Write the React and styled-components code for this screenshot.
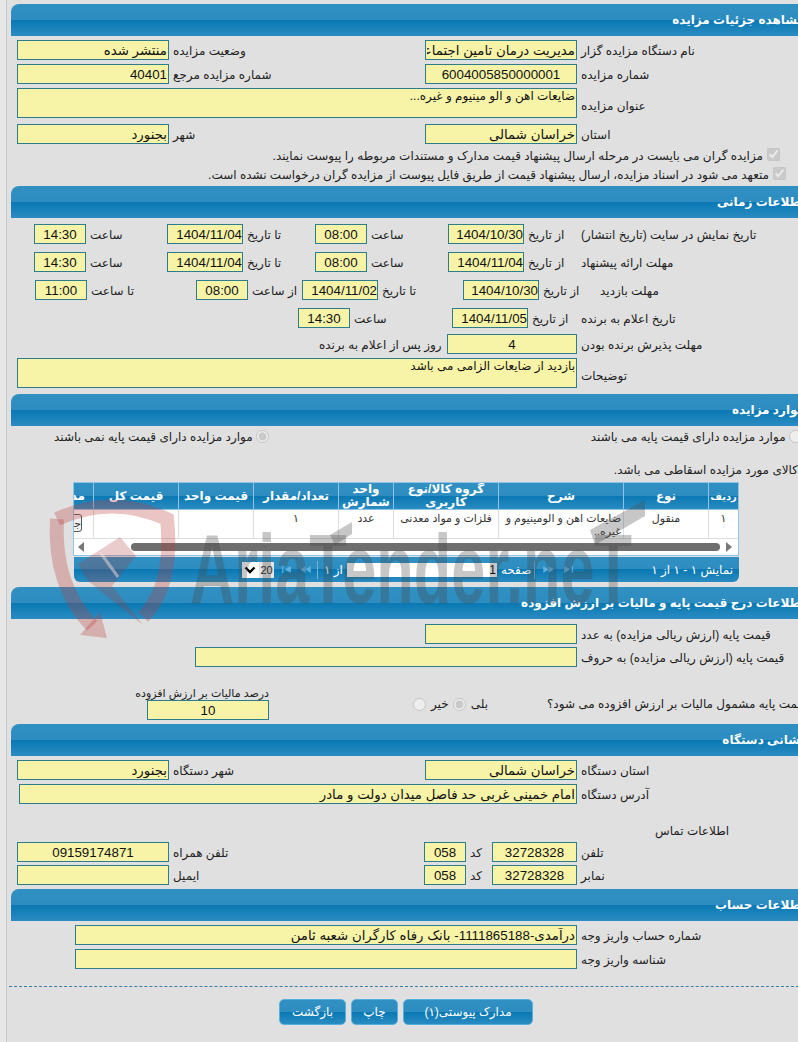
import styled, { createGlobalStyle } from 'styled-components';

const GlobalStyle = createGlobalStyle`
  html, body {
    margin: 0;
    padding: 0;
    background: #e6e6e6;
    overflow: hidden;
  }
  body {
    font-family: 'Liberation Sans', 'DejaVu Sans', sans-serif;
    font-size: 12px;
    color: #222;
  }
`;

const barGradient = 'linear-gradient(#3090c2 0, #2e8dc0 50%, #0978b2 50%, #2a8cc2 100%)';

export default function App() {
  return (
    <Page>
      <GlobalStyle />
      <Shell>
        <Section>
          <SectionTitle>مشاهده جزئیات مزایده</SectionTitle>
          <Row $mt={4} $pl={6}>
            <Field $w={152} readOnly value="منتشر شده" />
            <Label $w={256}>وضعیت مزایده</Label>
            <Field $w={152} readOnly value="مدیریت درمان تامین اجتماعی" />
            <Label>نام دستگاه مزایده گزار</Label>
          </Row>
          <Row $mt={4} $pl={6}>
            <Field $w={152} readOnly value="40401" />
            <Label $w={256}>شماره مزایده مرجع</Label>
            <Field $w={152} $center readOnly value="6004005850000001" />
            <Label>شماره مزایده</Label>
          </Row>
          <Row $mt={4} $pl={6} $h={30}>
            <Note $w={560} readOnly value="ضایعات اهن و الو مینیوم و غیره..." />
            <Label $low>عنوان مزایده</Label>
          </Row>
          <Row $mt={6} $pl={6}>
            <Field $w={152} readOnly value="بجنورد" />
            <Label $w={256}>شهر</Label>
            <Field $w={152} readOnly value="خراسان شمالی" />
            <Label>استان</Label>
          </Row>
          <CheckRow $mt={3} $pr={31}>
            <Text>مزایده گران می بایست در مرحله ارسال پیشنهاد قیمت مدارک و مستندات مربوطه را پیوست نمایند.</Text>
            <Check type="checkbox" checked disabled readOnly />
          </CheckRow>
          <CheckRow $mt={1} $pr={25}>
            <Text>متعهد می شود در اسناد مزایده، ارسال پیشنهاد قیمت از طریق فایل پیوست از مزایده گران درخواست نشده است.</Text>
            <Check type="checkbox" checked disabled readOnly />
          </CheckRow>
          <Spacer $h={2} />
        </Section>

        <Section>
          <SectionTitle>اطلاعات زمانی</SectionTitle>
          <Row $mt={6} $pl={23}>
            <TimeField $w={52} readOnly value="14:30" />
            <Label $w={81}>ساعت</Label>
            <DateField $w={76} readOnly value="1404/11/04" />
            <Label $w={72}>تا تاریخ</Label>
            <TimeField $w={52} readOnly value="08:00" />
            <Label $w={81}>ساعت</Label>
            <DateField $w={76} readOnly value="1404/10/30" />
            <Label $w={53}>از تاریخ</Label>
            <Label>تاریخ نمایش در سایت (تاریخ انتشار)</Label>
          </Row>
          <Row $mt={8} $pl={23}>
            <TimeField $w={52} readOnly value="14:30" />
            <Label $w={81}>ساعت</Label>
            <DateField $w={76} readOnly value="1404/11/04" />
            <Label $w={72}>تا تاریخ</Label>
            <TimeField $w={52} readOnly value="08:00" />
            <Label $w={81}>ساعت</Label>
            <DateField $w={76} readOnly value="1404/11/04" />
            <Label $w={53}>از تاریخ</Label>
            <Label>مهلت ارائه پیشنهاد</Label>
          </Row>
          <Row $mt={8} $pl={24}>
            <TimeField $w={52} readOnly value="11:00" />
            <Label $w={109}>تا ساعت</Label>
            <TimeField $w={52} readOnly value="08:00" />
            <Label $w={54}>از ساعت</Label>
            <DateField $w={76} readOnly value="1404/11/02" />
            <Label $w={85}>تا تاریخ</Label>
            <DateField $w={76} readOnly value="1404/10/30" />
            <Label $w={57}>از تاریخ</Label>
            <Label>مهلت بازدید</Label>
          </Row>
          <Row $mt={8} $pl={287}>
            <TimeField $w={52} readOnly value="14:30" />
            <Label $w={102}>ساعت</Label>
            <DateField $w={76} readOnly value="1404/11/05" />
            <Label $w={49}>از تاریخ</Label>
            <Label>تاریخ اعلام به برنده</Label>
          </Row>
          <Row $mt={6} $pl={304}>
            <Label $w={132}>روز پس از اعلام به برنده</Label>
            <Field $w={130} $center readOnly value="4" />
            <Label>مهلت پذیرش برنده بودن</Label>
          </Row>
          <Row $mt={4} $pl={6} $h={30}>
            <Note $w={560} readOnly value="بازدید از ضایعات الزامی می باشد" />
            <Label $low>توضیحات</Label>
          </Row>
          <Spacer $h={6} />
        </Section>

        <Section>
          <SectionTitle>موارد مزایده</SectionTitle>
          <Row $mt={2} $pl={43} $h={18}>
            <Text>موارد مزایده دارای قیمت پایه نمی باشند</Text>
            <Radio type="radio" checked disabled readOnly $ml={3} />
            <Spacer $w={322} />
            <Text>موارد مزایده دارای قیمت پایه می باشند</Text>
            <Radio type="radio" disabled readOnly $ml={3} />
          </Row>
          <NoteLine>کالای مورد مزایده اسقاطی می باشد.</NoteLine>
          <Grid>
            <GridTable>
              <colgroup>
                <col style={{ width: 20 }} />
                <col style={{ width: 85 }} />
                <col style={{ width: 75 }} />
                <col style={{ width: 85 }} />
                <col style={{ width: 55 }} />
                <col style={{ width: 105 }} />
                <col style={{ width: 125 }} />
                <col style={{ width: 85 }} />
                <col style={{ width: 29 }} />
              </colgroup>
              <thead>
                <tr>
                  <HeadCell $clip>مدارک</HeadCell>
                  <HeadCell>قیمت کل</HeadCell>
                  <HeadCell>قیمت واحد</HeadCell>
                  <HeadCell>تعداد/مقدار</HeadCell>
                  <HeadCell>واحد شمارش</HeadCell>
                  <HeadCell>گروه کالا/نوع کاربری</HeadCell>
                  <HeadCell>شرح</HeadCell>
                  <HeadCell>نوع</HeadCell>
                  <HeadCell $small>ردیف</HeadCell>
                </tr>
              </thead>
              <tbody>
                <tr>
                  <Cell $clip><DocButton>جزئیات</DocButton></Cell>
                  <Cell />
                  <Cell />
                  <Cell>۱</Cell>
                  <Cell>عدد</Cell>
                  <Cell>فلزات و مواد معدنی</Cell>
                  <Cell $right>ضایعات اهن و الومینیوم و غیره..</Cell>
                  <Cell>منقول</Cell>
                  <Cell>۱</Cell>
                </tr>
              </tbody>
            </GridTable>
            <ScrollBar>
              <ScrollArrow viewBox="0 0 6 10"><path d="M6 0 L0 5 L6 10 Z" /></ScrollArrow>
              <ScrollThumb />
              <ScrollArrow viewBox="0 0 6 10"><path d="M0 0 L6 5 L0 10 Z" /></ScrollArrow>
            </ScrollBar>
          </Grid>
          <Pager>
            <PageSize>
              <svg width="12" height="10" viewBox="0 0 12 10">
                <path d="M1.5 2.5 L6 7 L10.5 2.5" fill="none" stroke="#000" strokeWidth="2.4" />
              </svg>
              <PageSizeValue>20</PageSizeValue>
            </PageSize>
            <NavIcon viewBox="0 0 12 8"><path d="M1 0 H2.4 V8 H1 Z M11 0 V8 L4 4 Z" /></NavIcon>
            <NavIcon viewBox="0 0 12 8" $ml={8}><path d="M6 0 V8 L0 4 Z M12 0 V8 L6 4 Z" /></NavIcon>
            <PagerDivider $ml={6} />
            <PagerText $ml={6}>از ۱</PagerText>
            <PageInput readOnly value="1" />
            <PagerText $ml={4}>صفحه</PagerText>
            <PagerDivider $ml={3} />
            <NavIcon viewBox="0 0 12 8" $ml={8}><path d="M0 0 L6 4 L0 8 Z M6 0 L12 4 L6 8 Z" /></NavIcon>
            <NavIcon viewBox="0 0 12 8" $ml={9}><path d="M1 0 L8 4 L1 8 Z M9.6 0 H11 V8 H9.6 Z" /></NavIcon>
            <PagerCount>نمایش ۱ - ۱ از ۱</PagerCount>
          </Pager>
          <Spacer $h={5} />
        </Section>

        <Section>
          <SectionTitle>اطلاعات درج قیمت پایه و مالیات بر ارزش افزوده</SectionTitle>
          <Row $mt={5} $pl={414}>
            <Field $w={152} readOnly value="" />
            <Label>قیمت پایه (ارزش ریالی مزایده) به عدد</Label>
          </Row>
          <Row $mt={3} $pl={184}>
            <Field $w={382} readOnly value="" />
            <Label>قیمت پایه (ارزش ریالی مزایده) به حروف</Label>
          </Row>
          <TaxRow>
            <TaxBox>
              <TaxLabel>درصد مالیات بر ارزش افزوده</TaxLabel>
              <Field $w={122} $center readOnly value="10" />
            </TaxBox>
            <Radio type="radio" disabled readOnly $ml={144} />
            <Text $ml={5}>خیر</Text>
            <Radio type="radio" checked disabled readOnly $ml={4} />
            <Text $ml={5}>بلی</Text>
            <Text $ml={59}>قیمت پایه مشمول مالیات بر ارزش افزوده می شود؟</Text>
          </TaxRow>
          <Spacer $h={4} />
        </Section>

        <Section>
          <SectionTitle>نشانی دستگاه</SectionTitle>
          <Row $mt={4} $pl={6}>
            <Field $w={152} readOnly value="بجنورد" />
            <Label $w={256}>شهر دستگاه</Label>
            <Field $w={152} readOnly value="خراسان شمالی" />
            <Label>استان دستگاه</Label>
          </Row>
          <Row $mt={4} $pl={8}>
            <Field $w={558} readOnly value="امام خمینی غربی حد فاصل میدان دولت و مادر" />
            <Label>آدرس دستگاه</Label>
          </Row>
          <Row $mt={20} $pl={644} $h={14}>
            <Text>اطلاعات تماس</Text>
          </Row>
          <Row $mt={4} $pl={6}>
            <Field $w={152} $center readOnly value="09159174871" />
            <Label $w={255}>تلفن همراه</Label>
            <Field $w={42} $center readOnly value="058" />
            <Label $w={26}>کد</Label>
            <Field $w={85} $center readOnly value="32728328" />
            <Label>تلفن</Label>
          </Row>
          <Row $mt={3} $pl={6}>
            <Field $w={152} readOnly value="" />
            <Label $w={255}>ایمیل</Label>
            <Field $w={42} $center readOnly value="058" />
            <Label $w={26}>کد</Label>
            <Field $w={85} $center readOnly value="32728328" />
            <Label>نمابر</Label>
          </Row>
          <Spacer $h={4} />
        </Section>

        <Section>
          <SectionTitle>اطلاعات حساب</SectionTitle>
          <Row $mt={4} $pl={64}>
            <Field $w={502} readOnly value="درآمدی-1111865188- بانک رفاه کارگران شعبه ثامن" />
            <Label>شماره حساب واریز وجه</Label>
          </Row>
          <Row $mt={4} $pl={64}>
            <Field $w={502} readOnly value="" />
            <Label>شناسه واریز وجه</Label>
          </Row>
        </Section>

        <Divider />
        <Actions>
          <ActionButton $w={67}>بازگشت</ActionButton>
          <ActionButton $w={47}>چاپ</ActionButton>
          <ActionButton $w={130}>مدارک پیوستی(۱)</ActionButton>
        </Actions>
      </Shell>

      <Watermark viewBox="0 0 798 1042" aria-hidden="true">
        <g fill="none" stroke="rgb(190,60,60)" strokeOpacity="0.3" strokeWidth="14">
          <path d="M57 519 Q112 494 167 519 Q174 585 143 617" />
          <path d="M57 519 Q53 585 92 626" />
        </g>
        <path d="M120 537 L136 556 L112 586 L143 625 L87 580 L78 564 Z" fill="rgb(170,50,50)" fillOpacity="0.25" />
        <path d="M100 552 L118 577" stroke="rgb(240,220,220)" strokeOpacity="0.5" strokeWidth="3" />
        <path d="M80 635 L107 638 L100 612 Z" fill="rgb(190,60,60)" fillOpacity="0.3" />
        <WatermarkText x="190" y="603" textLength="442" lengthAdjust="spacingAndGlyphs">AriaTender.neT</WatermarkText>
        <path d="M330 535 L352 522 L352 534 L335 545 Z M590 530 L645 500 L645 516 L595 545 Z" fill="rgb(70,70,70)" fillOpacity="0.3" />
      </Watermark>
    </Page>
  );
}

const Page = styled.div`
  position: relative;
  width: 798px;
  height: 1042px;
  overflow: hidden;
`;

const Shell = styled.div`
  margin-left: 6px;
  height: 1042px;
  box-sizing: border-box;
  padding: 4px 0 0 4px;
  border-left: 1px solid #c8c8c8;
  background: #e0e0e0;
  width: 830px;
`;

const Section = styled.section`
  width: 800px;
`;

const SectionTitle = styled.h2`
  margin: 0;
  height: 32px;
  box-sizing: border-box;
  padding: 7px 6px 0 0;
  direction: rtl;
  font-size: 12px;
  line-height: 18px;
  font-weight: 700;
  color: #fff;
  background: ${barGradient};
  border-radius: 8px 8px 0 0;
`;

const Row = styled.div`
  display: flex;
  align-items: center;
  height: ${(p) => p.$h || 20}px;
  margin-top: ${(p) => p.$mt || 0}px;
  padding-left: ${(p) => p.$pl || 0}px;
`;

const CheckRow = styled.div`
  display: flex;
  align-items: center;
  justify-content: flex-end;
  height: 18px;
  margin-top: ${(p) => p.$mt || 0}px;
  padding-right: ${(p) => p.$pr || 0}px;
`;

const Field = styled.input`
  flex: none;
  width: ${(p) => p.$w}px;
  height: 20px;
  box-sizing: border-box;
  margin: 0;
  padding: 0 1px;
  border: 1px solid #2e7d8e;
  border-radius: 0;
  outline: none;
  background: #f7f4a8;
  direction: rtl;
  color: #111;
  font-family: inherit;
  font-size: 13.33px;
  text-align: ${(p) => (p.$center ? 'center' : 'right')};
`;

const DateField = styled(Field)`
  padding: 0 0 0 1px;
`;

const TimeField = styled(Field).attrs({ $center: true })``;

const Note = styled.textarea`
  flex: none;
  display: block;
  width: ${(p) => p.$w}px;
  height: 30px;
  box-sizing: border-box;
  margin: 0;
  padding: 0 1px;
  border: 1px solid #2e7d8e;
  border-radius: 0;
  outline: none;
  resize: none;
  overflow: hidden;
  background: #f7f4a8;
  direction: rtl;
  color: #111;
  font-family: inherit;
  font-size: 12px;
`;

const Label = styled.div`
  flex: none;
  box-sizing: border-box;
  width: ${(p) => (p.$w ? `${p.$w}px` : 'auto')};
  padding-left: 4px;
  padding-top: ${(p) => (p.$low ? 6 : 2)}px;
  direction: rtl;
  text-align: left;
  white-space: nowrap;
`;

const Text = styled.span`
  flex: none;
  direction: rtl;
  white-space: nowrap;
  margin-left: ${(p) => p.$ml || 0}px;
`;

const Spacer = styled.div`
  flex: none;
  height: ${(p) => p.$h || 0}px;
  width: ${(p) => p.$w || 0}px;
`;

const Check = styled.input`
  flex: none;
  width: 13px;
  height: 13px;
  margin: -4px 0 0 4px;
`;

const Radio = styled.input`
  flex: none;
  width: 13px;
  height: 13px;
  margin: -2px 0 0 ${(p) => p.$ml || 0}px;
`;

const NoteLine = styled.div`
  direction: rtl;
  height: 16px;
  margin-top: 17px;
  padding-right: 13px;
  white-space: nowrap;
`;

const Grid = styled.div`
  width: 666px;
  margin: 3px 0 0 62px;
  box-sizing: border-box;
  border: 1px solid #8fc4e6;
  background: #fff;
`;

const GridTable = styled.table`
  width: 664px;
  table-layout: fixed;
  border-collapse: separate;
  border-spacing: 0;
`;

const HeadCell = styled.th`
  box-sizing: border-box;
  height: 27px;
  padding: 0 ${(p) => (p.$clip ? 9 : 0)}px 0 0;
  direction: rtl;
  overflow: hidden;
  font-size: ${(p) => (p.$small ? 10 : 12)}px;
  line-height: 13px;
  font-weight: 700;
  color: #fff;
  background: ${barGradient};
  border-right: 1px solid #8fc4e6;
  border-bottom: 1px solid #8fc4e6;
  text-align: ${(p) => (p.$clip ? 'right' : 'center')};
  white-space: ${(p) => (p.$clip ? 'nowrap' : 'normal')};
  &:last-child { border-right: 0; }
`;

const Cell = styled.td`
  box-sizing: border-box;
  height: 28px;
  padding: 2px 2px 0;
  direction: rtl;
  overflow: hidden;
  vertical-align: top;
  font-size: 11px;
  line-height: 13px;
  color: #333;
  border-right: 1px solid #ddd;
  border-bottom: 1px solid #ddd;
  text-align: ${(p) => (p.$right ? 'right' : 'center')};
  white-space: ${(p) => (p.$clip ? 'nowrap' : 'normal')};
  &:first-child { padding: 4px 0 0; }
  &:last-child { border-right: 0; }
`;

const DocButton = styled.div`
  width: 40px;
  height: 18px;
  margin-right: 12px;
  box-sizing: border-box;
  border: 1px solid #555;
  border-radius: 3px;
  background: #f2f2f2;
  font-size: 11px;
  line-height: 16px;
  text-align: right;
`;

const ScrollBar = styled.div`
  display: flex;
  align-items: center;
  height: 16px;
  padding: 0 6px 0 4px;
`;

const ScrollArrow = styled.svg`
  flex: none;
  width: 6px;
  height: 10px;
  fill: #777;
`;

const ScrollThumb = styled.div`
  width: 589px;
  height: 8px;
  margin: 0 auto 0 47px;
  border-radius: 4px;
  background: #6e6e6e;
`;

const Pager = styled.div`
  display: flex;
  align-items: center;
  width: 665px;
  height: 25px;
  margin: 1px 0 0 63px;
  box-sizing: border-box;
  padding-left: 168px;
  padding-right: 6px;
  background: ${barGradient};
  border-radius: 0 0 6px 6px;
`;

const PageSize = styled.div`
  flex: none;
  display: flex;
  align-items: center;
  gap: 3px;
  width: 32px;
  height: 16px;
  box-sizing: border-box;
  padding-left: 2px;
  background: #fff;
`;

const PageSizeValue = styled.span`
  flex: 1;
  height: 16px;
  background: #e4e4e4;
  font-size: 11px;
  line-height: 16px;
  text-align: center;
  color: #222;
`;

const NavIcon = styled.svg`
  flex: none;
  width: 11px;
  height: 7px;
  margin-left: ${(p) => p.$ml || 7}px;
  fill: #5fb0de;
`;

const PagerDivider = styled.div`
  flex: none;
  width: 1px;
  height: 18px;
  margin-left: ${(p) => p.$ml || 6}px;
  background: #6fb4dc;
`;

const PagerText = styled.span`
  flex: none;
  direction: rtl;
  color: #fff;
  margin-left: ${(p) => p.$ml || 0}px;
`;

const PageInput = styled.input`
  flex: none;
  width: 150px;
  height: 14px;
  box-sizing: border-box;
  margin: 0 0 0 4px;
  padding: 0 1px;
  border: 0;
  outline: none;
  background: #fff;
  direction: rtl;
  font-family: inherit;
  font-size: 12px;
`;

const PagerCount = styled.span`
  flex: none;
  margin-left: auto;
  direction: rtl;
  color: #fff;
`;

const TaxRow = styled.div`
  display: flex;
  align-items: flex-end;
  margin-top: 20px;
  padding-left: 123px;
  height: 33px;
  & > span { line-height: 16px; padding-bottom: 8px; }
  & > input { margin-bottom: 9px; }
`;

const TaxBox = styled.div`
  flex: none;
  display: flex;
  flex-direction: column;
  align-items: flex-end;
  width: 135px;
`;

const TaxLabel = styled.div`
  direction: rtl;
  white-space: nowrap;
  font-size: 11px;
  line-height: 13px;
`;

const Divider = styled.div`
  width: 800px;
  margin: 17px 0 0 -2px;
  border-top: 1px dashed #3a7fa8;
`;

const Actions = styled.div`
  display: flex;
  gap: 5px;
  margin: 12px 0 0 268px;
`;

const ActionButton = styled.button`
  flex: none;
  width: ${(p) => p.$w}px;
  height: 26px;
  padding: 0;
  direction: rtl;
  border: 1px solid #55b0e0;
  border-radius: 5px;
  color: #fff;
  font-family: inherit;
  font-size: 12px;
  background: ${barGradient};
`;

const Watermark = styled.svg`
  position: absolute;
  left: 0;
  top: 0;
  width: 798px;
  height: 1042px;
  pointer-events: none;
`;

const WatermarkText = styled.text`
  font-family: 'Liberation Sans', sans-serif;
  font-size: 98px;
  font-weight: 700;
  fill: rgb(70, 70, 70);
  fill-opacity: 0.3;
`;
